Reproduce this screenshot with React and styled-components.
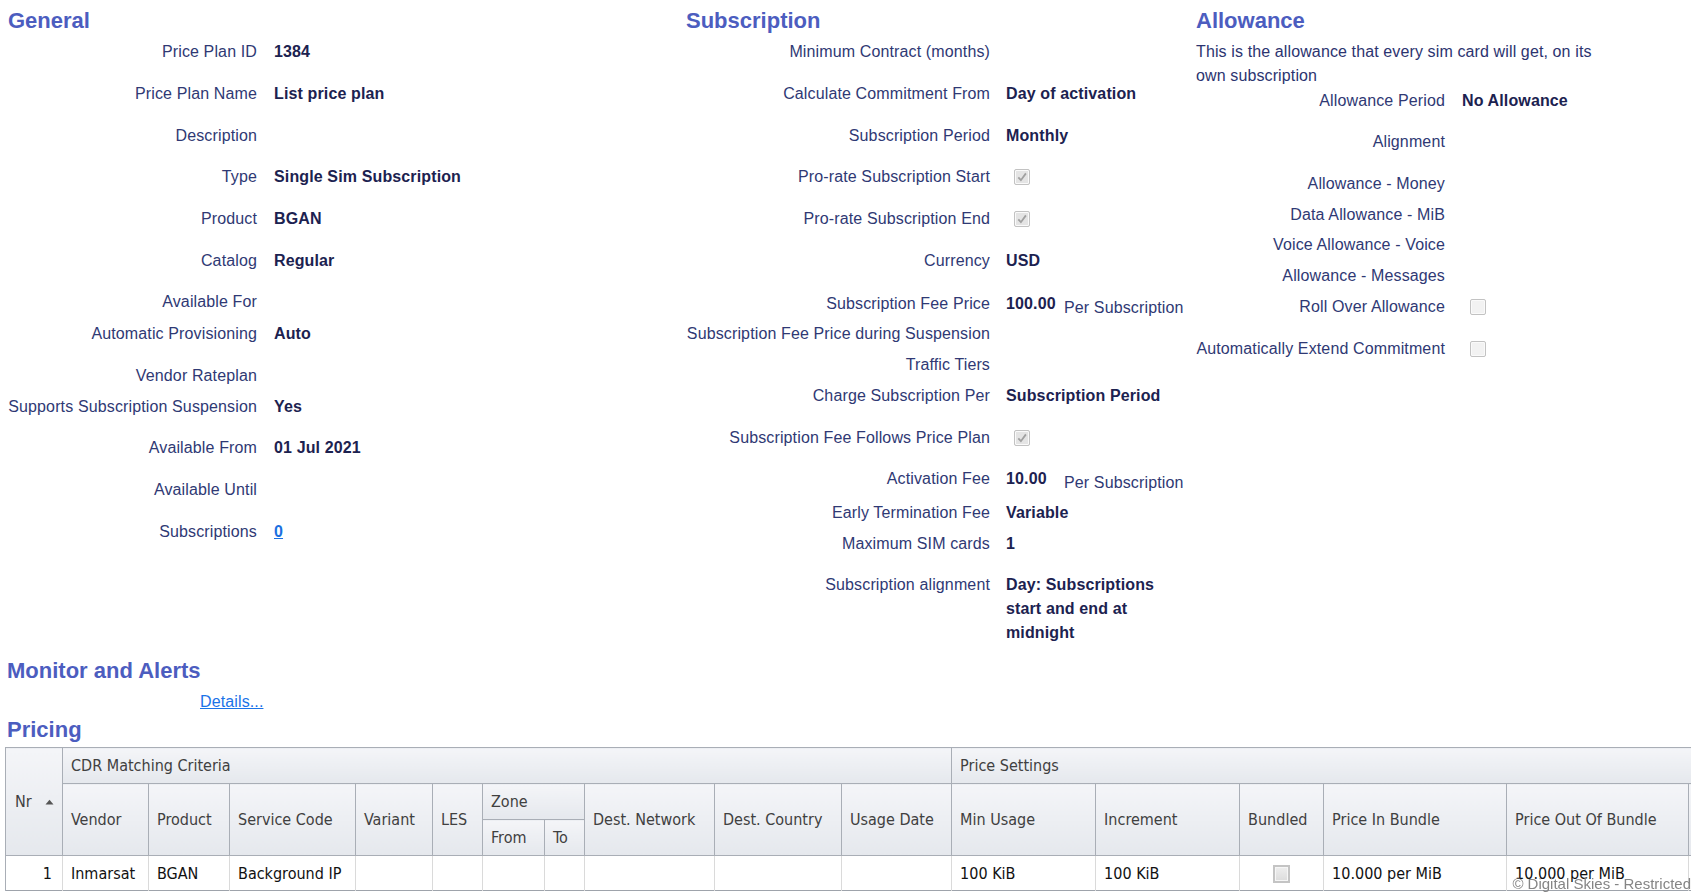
import styled, { createGlobalStyle } from "styled-components";

const GlobalStyle = createGlobalStyle`
  html, body {
    margin: 0;
    padding: 0;
    background: #ffffff;
    overflow: hidden;
  }
  body {
    font-family: "Liberation Sans", Arial, sans-serif;
    font-size: 16px;
  }
`;

const general = [
  { label: "Price Plan ID", value: "1384", h: 42 },
  { label: "Price Plan Name", value: "List price plan", h: 42 },
  { label: "Description", h: 41 },
  { label: "Type", value: "Single Sim Subscription", h: 42 },
  { label: "Product", value: "BGAN", h: 42 },
  { label: "Catalog", value: "Regular", h: 41 },
  { label: "Available For", h: 32 },
  { label: "Automatic Provisioning", value: "Auto", h: 42 },
  { label: "Vendor Rateplan", h: 31 },
  { label: "Supports Subscription Suspension", value: "Yes", h: 41 },
  { label: "Available From", value: "01 Jul 2021", h: 42 },
  { label: "Available Until", h: 42 },
  { label: "Subscriptions", link: "0", h: 42 },
];

const subscription = [
  { label: "Minimum Contract (months)", h: 42 },
  { label: "Calculate Commitment From", value: "Day of activation", h: 42 },
  { label: "Subscription Period", value: "Monthly", h: 41 },
  { label: "Pro-rate Subscription Start", check: true, h: 42 },
  { label: "Pro-rate Subscription End", check: true, h: 42 },
  { label: "Currency", value: "USD", h: 43 },
  { label: "Subscription Fee Price", value: "100.00", unit: "Per Subscription", h: 30 },
  { label: "Subscription Fee Price during Suspension", h: 31 },
  { label: "Traffic Tiers", h: 31 },
  { label: "Charge Subscription Per", value: "Subscription Period", h: 42 },
  { label: "Subscription Fee Follows Price Plan", check: true, h: 41 },
  { label: "Activation Fee", value: "10.00", unit: "Per Subscription", h: 34 },
  { label: "Early Termination Fee", value: "Variable", h: 31 },
  { label: "Maximum SIM cards", value: "1", h: 41 },
  { label: "Subscription alignment", value: "Day: Subscriptions start and end at midnight", wrap: true, h: 72 },
];

const allowance = [
  { label: "Allowance Period", value: "No Allowance", h: 41 },
  { label: "Alignment", h: 42 },
  { label: "Allowance - Money", h: 31 },
  { label: "Data Allowance - MiB", h: 30 },
  { label: "Voice Allowance - Voice", h: 31 },
  { label: "Allowance - Messages", h: 31 },
  { label: "Roll Over Allowance", check: false, h: 42 },
  { label: "Automatically Extend Commitment", check: false, h: 42 },
];

const Checkbox = ({ checked }) => (
  <CheckBox $checked={checked}>
    {checked && (
      <svg width="12" height="12" viewBox="0 0 12 12">
        <path d="M2.3 6.4 L4.9 9.2 L9.9 2.4" fill="none" stroke="#a0a0a0" strokeWidth="1.8" />
      </svg>
    )}
  </CheckBox>
);

const Field = ({ row, labelWidth, gap }) => (
  <Row $h={row.h} $label={labelWidth} $gap={gap}>
    <Label>{row.label}</Label>
    <Value $wrap={row.wrap}>
      {row.value && !row.unit && row.value}
      {row.unit && (
        <Amount>
          <AmountValue>{row.value}</AmountValue>
          <Unit>{row.unit}</Unit>
        </Amount>
      )}
      {row.link && <ValueLink href="#">{row.link}</ValueLink>}
      {row.check !== undefined && <Checkbox checked={row.check} />}
    </Value>
  </Row>
);

const SortArrow = () => (
  <svg width="9" height="6" viewBox="0 0 9 6">
    <path d="M0.5 5.5 L4.5 0.8 L8.5 5.5 Z" fill="#555" />
  </svg>
);

const cols = [57, 86, 81, 126, 77, 50, 62, 40, 130, 127, 110, 144, 144, 84, 183, 182, 140];

const App = () => {
  return (
    <Page>
      <GlobalStyle />
      <Columns>
        <Column>
          <SectionTitle>General</SectionTitle>
          {general.map((r) => (
            <Field key={r.label} row={r} labelWidth={249} gap={17} />
          ))}
        </Column>
        <Column>
          <SectionTitle>Subscription</SectionTitle>
          {subscription.map((r) => (
            <Field key={r.label} row={r} labelWidth={304} gap={16} />
          ))}
        </Column>
        <Column>
          <SectionTitle>Allowance</SectionTitle>
          <Intro>This is the allowance that every sim card will get, on its own subscription</Intro>
          {allowance.map((r) => (
            <Field key={r.label} row={r} labelWidth={249} gap={17} />
          ))}
        </Column>
      </Columns>

      <SectionTitle $top={13} $indent={2}>Monitor and Alerts</SectionTitle>
      <DetailsRow>
        <DetailsLink href="#">Details...</DetailsLink>
      </DetailsRow>

      <SectionTitle $top={3} $bottom={4} $indent={2}>Pricing</SectionTitle>
      <Grid>
        <colgroup>
          {cols.map((w, i) => (
            <col key={i} style={{ width: w }} />
          ))}
        </colgroup>
        <thead>
          <tr>
            <Head rowSpan={3}>
              <NrHead>
                Nr <SortArrow />
              </NrHead>
            </Head>
            <Head colSpan={10}>CDR Matching Criteria</Head>
            <Head colSpan={6}>Price Settings</Head>
          </tr>
          <tr>
            <Head rowSpan={2}>Vendor</Head>
            <Head rowSpan={2}>Product</Head>
            <Head rowSpan={2}>Service Code</Head>
            <Head rowSpan={2}>Variant</Head>
            <Head rowSpan={2}>LES</Head>
            <Head colSpan={2}>Zone</Head>
            <Head rowSpan={2}>Dest. Network</Head>
            <Head rowSpan={2}>Dest. Country</Head>
            <Head rowSpan={2}>Usage Date</Head>
            <Head rowSpan={2}>Min Usage</Head>
            <Head rowSpan={2}>Increment</Head>
            <Head rowSpan={2}>Bundled</Head>
            <Head rowSpan={2}>Price In Bundle</Head>
            <Head rowSpan={2}>Price Out Of Bundle</Head>
            <Head rowSpan={2}></Head>
          </tr>
          <tr>
            <Head>From</Head>
            <Head>To</Head>
          </tr>
        </thead>
        <tbody>
          <tr>
            <Cell $align="right">1</Cell>
            <Cell>Inmarsat</Cell>
            <Cell>BGAN</Cell>
            <Cell>Background IP</Cell>
            <Cell />
            <Cell />
            <Cell />
            <Cell />
            <Cell />
            <Cell />
            <Cell />
            <Cell>100 KiB</Cell>
            <Cell>100 KiB</Cell>
            <Cell $align="center">
              <BundleBox />
            </Cell>
            <Cell>10.000 per MiB</Cell>
            <Cell>10.000 per MiB</Cell>
            <Cell />
          </tr>
        </tbody>
      </Grid>

      <Footer>© Digital Skies - Restricted</Footer>
    </Page>
  );
};

const Page = styled.div`
  padding: 8px 0 0 5px;
  width: 1800px;
`;

const Columns = styled.div`
  display: grid;
  grid-template-columns: 678px 510px 1fr;
  padding-left: 3px;
  width: 1683px;
`;

const Column = styled.div`
  display: flex;
  flex-direction: column;
`;

const SectionTitle = styled.h2`
  margin: ${({ $top }) => $top || 0}px 0 ${({ $bottom }) => $bottom ?? 6}px
    ${({ $indent }) => $indent || 0}px;
  font-size: 22px;
  line-height: 26px;
  font-weight: bold;
  color: #4c5dbf;
`;

const Intro = styled.p`
  margin: 0 0 1px;
  max-width: 404px;
  line-height: 24px;
  letter-spacing: 0.12px;
  color: #2c3470;
`;

const Row = styled.div`
  display: grid;
  grid-template-columns: ${({ $label }) => $label}px 1fr;
  column-gap: ${({ $gap }) => $gap}px;
  align-items: start;
  min-height: ${({ $h }) => $h}px;
  line-height: 24px;
  letter-spacing: 0.13px;
`;

const Label = styled.div`
  text-align: right;
  color: #2f3974;
  white-space: nowrap;
`;

const Value = styled.div`
  font-weight: bold;
  color: #1c2250;
  white-space: ${({ $wrap }) => ($wrap ? "normal" : "nowrap")};
  max-width: ${({ $wrap }) => ($wrap ? "160px" : "none")};
`;

const Amount = styled.div`
  display: flex;
`;

const AmountValue = styled.span`
  min-width: 58px;
`;

const Unit = styled.span`
  font-weight: normal;
  color: #2f3974;
  padding-top: 4px;
`;

const ValueLink = styled.a`
  color: #1a6fe0;
  text-decoration: underline;
`;

const CheckBox = styled.span`
  display: flex;
  align-items: center;
  justify-content: center;
  width: 14px;
  height: 14px;
  margin: 4px 0 0 8px;
  border: 1px solid #c2c2c2;
  border-radius: 2px;
  background: ${({ $checked }) => ($checked ? "#e4e4e4" : "#f2f2f2")};
  box-shadow: inset 0 0 0 1px #fafafa;
`;

const DetailsRow = styled.div`
  margin-top: 6px;
  padding-left: 195px;
  line-height: 24px;
  letter-spacing: 0.12px;
`;

const DetailsLink = styled.a`
  color: #1a73e8;
  text-decoration: underline;
`;

const Grid = styled.table`
  margin-top: 0;
  border-collapse: collapse;
  table-layout: fixed;
  width: 1823px;
  font-family: "DejaVu Sans Condensed", "DejaVu Sans", "Open Sans", sans-serif;
  font-stretch: condensed;
  font-size: 16px;
  border-top: 1px solid #9ea3ab;
  border-bottom: 1px solid #9ea3ab;
`;

const Head = styled.th`
  height: 35px;
  padding: 0 8px;
  text-align: left;
  vertical-align: middle;
  font-weight: normal;
  color: #404040;
  white-space: nowrap;
  overflow: hidden;
  border: 1px solid #a9aeb6;
  background: linear-gradient(#f4f5f8, #e5e8ed);
`;

const NrHead = styled.span`
  display: flex;
  align-items: center;
  gap: 13px;
  padding-left: 1px;
`;

const Cell = styled.td`
  height: 34px;
  padding: 0 8px;
  text-align: ${({ $align }) => $align || "left"};
  vertical-align: middle;
  color: #111111;
  white-space: nowrap;
  border-left: 1px solid #dadada;
  border-right: 1px solid #dadada;
  &:first-child {
    border-left: 1px solid #a9aeb6;
    padding-right: 10px;
  }
`;

const BundleBox = styled.span`
  display: inline-block;
  vertical-align: middle;
  width: 13px;
  height: 14px;
  border: 2px solid #c4c4c4;
  background: linear-gradient(#eeeeee, #dcdcdc);
  box-shadow: inset 0 0 0 1px #f6f6f6;
`;

const Footer = styled.div`
  position: fixed;
  right: 0;
  bottom: 0;
  line-height: 16px;
  color: #858585;
  font-size: 15px;
  white-space: nowrap;
`;

export default App;
